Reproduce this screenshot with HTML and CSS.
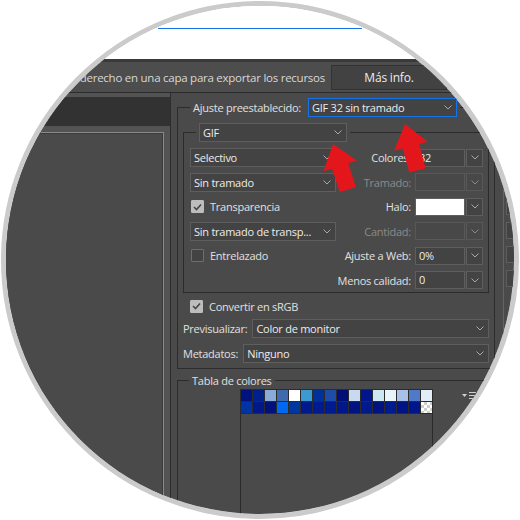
FILE: index.html
```html
<!DOCTYPE html>
<html lang="es">

<head>
    <meta charset="UTF-8">
    <title>Guardar para Web - GIF</title>
    <link rel="stylesheet" href="styles.css">
</head>

<body>
    <div class="lens">
        <div class="screen">
            <div class="topbar"><div class="topline"></div></div>

            <div class="infobar">
                <span class="hint">Haga clic con el botón derecho en una capa para exportar los recursos</span>
                <button class="more">Más info.</button>
            </div>

            <div class="main">
                <div class="preview-col">
                    <div class="tabs"></div>
                    <div class="frame"></div>
                </div>

                <div class="settings">
                    <div class="settings-col">
                        <fieldset class="group preset">
                            <legend>
                                <span class="legend-row">
                                    <span class="label">Ajuste preestablecido:</span>
                                    <span class="select focus preset-select">
                                        <span>GIF 32 sin tramado</span>
                                        <svg class="chev" width="8" height="5" viewBox="0 0 8 5"><polyline points="0.5,0.5 4,4 7.5,0.5"/></svg>
                                    </span>
                                </span>
                            </legend>

                            <fieldset class="group format">
                                <legend>
                                    <span class="select format-select">
                                        <span>GIF</span>
                                        <svg class="chev" width="8" height="5" viewBox="0 0 8 5"><polyline points="0.5,0.5 4,4 7.5,0.5"/></svg>
                                    </span>
                                </legend>

                                <div class="opts">
                                    <span class="select">
                                        <span>Selectivo</span>
                                        <svg class="chev" width="8" height="5" viewBox="0 0 8 5"><polyline points="0.5,0.5 4,4 7.5,0.5"/></svg>
                                    </span>
                                    <span class="label opt-label">Colores:</span>
                                    <span class="combo">
                                        <span class="val">32</span>
                                        <span class="drop"><svg class="chev" width="8" height="5" viewBox="0 0 8 5"><polyline points="0.5,0.5 4,4 7.5,0.5"/></svg></span>
                                    </span>

                                    <span class="select">
                                        <span>Sin tramado</span>
                                        <svg class="chev" width="8" height="5" viewBox="0 0 8 5"><polyline points="0.5,0.5 4,4 7.5,0.5"/></svg>
                                    </span>
                                    <span class="label opt-label disabled">Tramado:</span>
                                    <span class="combo off">
                                        <span class="val"></span>
                                        <span class="drop"><svg class="chev" width="8" height="5" viewBox="0 0 8 5"><polyline points="0.5,0.5 4,4 7.5,0.5"/></svg></span>
                                    </span>

                                    <span class="check">
                                        <span class="box on"><svg width="9" height="8" viewBox="0 0 9 8"><polyline points="1,4 3.5,6.5 8,1.5"/></svg></span>
                                        <span>Transparencia</span>
                                    </span>
                                    <span class="label opt-label">Halo:</span>
                                    <span class="combo halo">
                                        <span class="val"></span>
                                        <span class="drop"><svg class="chev" width="8" height="5" viewBox="0 0 8 5"><polyline points="0.5,0.5 4,4 7.5,0.5"/></svg></span>
                                    </span>

                                    <span class="select">
                                        <span>Sin tramado de transp...</span>
                                        <svg class="chev" width="8" height="5" viewBox="0 0 8 5"><polyline points="0.5,0.5 4,4 7.5,0.5"/></svg>
                                    </span>
                                    <span class="label opt-label disabled">Cantidad:</span>
                                    <span class="combo off">
                                        <span class="val"></span>
                                        <span class="drop"><svg class="chev" width="8" height="5" viewBox="0 0 8 5"><polyline points="0.5,0.5 4,4 7.5,0.5"/></svg></span>
                                    </span>

                                    <span class="check">
                                        <span class="box"></span>
                                        <span>Entrelazado</span>
                                    </span>
                                    <span class="label opt-label">Ajuste a Web:</span>
                                    <span class="combo">
                                        <span class="val">0%</span>
                                        <span class="drop"><svg class="chev" width="8" height="5" viewBox="0 0 8 5"><polyline points="0.5,0.5 4,4 7.5,0.5"/></svg></span>
                                    </span>

                                    <span></span>
                                    <span class="label opt-label">Menos calidad:</span>
                                    <span class="combo">
                                        <span class="val">0</span>
                                        <span class="drop"><svg class="chev" width="8" height="5" viewBox="0 0 8 5"><polyline points="0.5,0.5 4,4 7.5,0.5"/></svg></span>
                                    </span>
                                </div>
                            </fieldset>

                            <span class="check srgb">
                                <span class="box on"><svg width="9" height="8" viewBox="0 0 9 8"><polyline points="1,4 3.5,6.5 8,1.5"/></svg></span>
                                <span>Convertir en sRGB</span>
                            </span>

                            <div class="field-row preview-row">
                                <span class="label">Previsualizar:</span>
                                <span class="select">
                                    <span>Color de monitor</span>
                                    <svg class="chev" width="8" height="5" viewBox="0 0 8 5"><polyline points="0.5,0.5 4,4 7.5,0.5"/></svg>
                                </span>
                            </div>

                            <div class="field-row meta-row">
                                <span class="label">Metadatos:</span>
                                <span class="select">
                                    <span>Ninguno</span>
                                    <svg class="chev" width="8" height="5" viewBox="0 0 8 5"><polyline points="0.5,0.5 4,4 7.5,0.5"/></svg>
                                </span>
                            </div>
                        </fieldset>

                        <fieldset class="group colors">
                            <legend><span class="label">Tabla de colores</span></legend>
                            <span class="panel-menu">
                                <svg width="14" height="7" viewBox="0 0 14 7">
                                    <polygon points="0,2 5,2 2.5,5" />
                                    <rect x="7" y="0" width="7" height="1" />
                                    <rect x="7" y="3" width="7" height="1" />
                                    <rect x="7" y="6" width="7" height="1" />
                                </svg>
                            </span>
                            <div class="swatch-box">
                                <div class="swatches">
                                    <span style="background:#00127f"></span>
                                    <span style="background:#00208c"></span>
                                    <span style="background:#8aaad8"></span>
                                    <span style="background:#3f6aad"></span>
                                    <span style="background:#ffffff"></span>
                                    <span style="background:#3c9ad2"></span>
                                    <span style="background:#00309a"></span>
                                    <span style="background:#1d4ca9"></span>
                                    <span style="background:#000f78"></span>
                                    <span style="background:#c8daf0"></span>
                                    <span style="background:#00168e"></span>
                                    <span style="background:#cde9ef"></span>
                                    <span style="background:#e8f6fb"></span>
                                    <span style="background:#a9c1e7"></span>
                                    <span style="background:#4f7ac8"></span>
                                    <span style="background:#e3edf8"></span>

                                    <span style="background:#0034a5"></span>
                                    <span style="background:#001889"></span>
                                    <span style="background:#00117b"></span>
                                    <span style="background:#0069f0"></span>
                                    <span style="background:#0037a0"></span>
                                    <span style="background:#001a8d"></span>
                                    <span style="background:#001a8f"></span>
                                    <span style="background:#001a92"></span>
                                    <span style="background:#001887"></span>
                                    <span style="background:#001380"></span>
                                    <span style="background:#001a8c"></span>
                                    <span style="background:#001380"></span>
                                    <span style="background:#001a8f"></span>
                                    <span style="background:#001484"></span>
                                    <span style="background:#00168a"></span>
                                    <span class="clear"></span>
                                </div>
                            </div>
                        </fieldset>
                    </div>

                    <div class="side-col">
                        <div class="side-box"></div>
                        <div class="side-box"></div>
                        <div class="side-box"></div>
                        <div class="side-box"></div>
                    </div>
                </div>
            </div>

            <svg class="arrows" width="520" height="520" viewBox="0 0 520 520">
                <defs>
                    <polygon id="arrow" points="0,0 17.5,23 8.5,23 8.5,48 -8.5,48 -8.5,23 -17.5,23" />
                </defs>
                <use href="#arrow" transform="translate(333 144) rotate(-18)" />
                <use href="#arrow" transform="translate(405 124) rotate(-15)" />
            </svg>
        </div>
    </div>
</body>

</html>
```

FILE: styles.css
```css
* {
    box-sizing: border-box;
}

body {
    margin: 0;
    background: #fff;
    font-family: "Open Sans", "Noto Sans", sans-serif;
    font-size: 11px;
    letter-spacing: -0.25px;
    color: #dedede;
}

/* round "magnifier" crop */
.lens {
    width: 518px;
    height: 518px;
    margin: 1px;
    border: 5px solid #cbcbcb;
    border-radius: 50%;
    overflow: hidden;
}

.screen {
    position: relative;
    width: 520px;
    height: 520px;
    margin: -6px 0 0 -6px;
    display: flex;
    flex-direction: column;
    background: #fff;
}

.topbar {
    height: 59px;
    padding-top: 28px;
    background: #fff;
}

.topline {
    width: 204px;
    margin-left: 158px;
    border-top: 1px solid #1473e6;
}

.infobar {
    height: 34px;
    display: flex;
    align-items: center;
    justify-content: flex-end;
    padding-right: 73px;
    background: #4d4d4d;
    border-top: 3px solid #3a3a3a;
    border-bottom: 1px solid #2b2b2b;
}

.hint {
    flex-shrink: 0;
    white-space: nowrap;
    font-size: 11.5px;
    color: #d8d8d8;
}

.more {
    flex-shrink: 0;
    width: 116px;
    height: 25px;
    margin-left: 6px;
    padding: 0;
    background: #424242;
    border: 1px solid #333;
    color: #ececec;
    font: inherit;
    font-size: 12px;
    letter-spacing: -0.2px;
}

.main {
    flex: 1;
    min-height: 0;
    display: flex;
    background: #4a4a4a;
}

.preview-col {
    width: 171px;
    flex-shrink: 0;
    display: flex;
    flex-direction: column;
    padding-top: 4px;
    background: #535353;
    border-right: 1px solid #2d2d2d;
}

.tabs {
    height: 29px;
    background: #323232;
}

.frame {
    flex: 1;
    margin: 6px 6px 0 0;
    background: #4a4a4a;
    border-top: 1px solid #8a8a8a;
    border-right: 1px solid #8a8a8a;
    box-shadow: inset -1px 1px 0 #3b3b3b;
}

.settings {
    flex: 1;
    display: flex;
    padding: 5px 0 0 6px;
}

.settings-col {
    width: 318px;
    flex-shrink: 0;
    display: flex;
    flex-direction: column;
}

.group {
    margin: 0;
    min-width: 0;
    border: 1px solid #2c2c2c;
}

.group legend {
    padding: 0 3px;
}

.legend-row {
    display: flex;
    align-items: center;
    gap: 7px;
}

.label {
    white-space: nowrap;
    color: #e0e0e0;
}

.label.disabled {
    color: #8a8a8a;
}

.chev {
    flex-shrink: 0;
    fill: none;
    stroke: #a9a9a9;
    stroke-width: 1;
}

.select {
    height: 19px;
    display: flex;
    align-items: center;
    justify-content: space-between;
    padding: 0 4px 0 3px;
    background: #434343;
    border: 1px solid #5e5e5e;
    color: #ececec;
    white-space: nowrap;
}

.select.focus {
    border-color: #1473e6;
}

.preset {
    padding: 6px 5px 5px;
}

.preset > legend {
    margin-left: 7px;
}

.preset-select {
    width: 149px;
}

.format {
    padding: 6px 5px 2px 6px;
}

.format > legend {
    margin-left: 6px;
}

.format-select {
    width: 148px;
}

.opts {
    display: grid;
    grid-template-columns: 146px minmax(0, 1fr) 68px;
    grid-auto-rows: 19px;
    row-gap: 5.6px;
    align-items: center;
}

.opt-label {
    text-align: right;
    padding-right: 4px;
}

.combo {
    height: 18px;
    display: flex;
    gap: 1px;
}

.combo .val {
    flex: 1;
    padding-left: 3px;
    line-height: 16px;
    background: #434343;
    border: 1px solid #5e5e5e;
    color: #ececec;
}

.combo .drop {
    width: 17px;
    display: flex;
    align-items: center;
    justify-content: center;
    background: #434343;
    border: 1px solid #5e5e5e;
}

.combo.off .val,
.combo.off .drop {
    background: #484848;
    border-color: #585858;
}

.combo.off .chev {
    stroke: #8a8a8a;
}

.combo.halo .val {
    background: #fff;
}

.check {
    display: flex;
    align-items: center;
    gap: 6px;
    padding-left: 1px;
    color: #e0e0e0;
}

.box {
    width: 13px;
    height: 13px;
    display: flex;
    align-items: center;
    justify-content: center;
    background: #434343;
    border: 1px solid #6e6e6e;
    border-radius: 1px;
}

.box.on {
    background: #bdbdbd;
    border-color: #bdbdbd;
}

.box svg {
    fill: none;
    stroke: #464646;
    stroke-width: 1.6;
}

.srgb {
    height: 19px;
    margin-top: 4px;
    padding-left: 7px;
}

.field-row {
    display: flex;
    align-items: center;
    gap: 5px;
}

.field-row .select {
    flex: 1;
}

.preview-row {
    margin-top: 3px;
}

.meta-row {
    margin-top: 6px;
}

.colors {
    position: relative;
    flex: 1;
    margin-top: 4px;
    padding: 1px 5px 0;
    border-bottom: none;
}

.colors > legend {
    margin-left: 6px;
}

.panel-menu {
    position: absolute;
    top: 4px;
    right: 15px;
    padding: 0 3px;
    display: flex;
    background: #4a4a4a;
    fill: #d0d0d0;
}

.swatch-box {
    width: 193px;
    height: 200px;
    margin: 0 auto;
    border: 1px solid #2b2b2b;
}

.swatches {
    display: grid;
    grid-template-columns: repeat(16, 11px);
    grid-auto-rows: 11px;
    gap: 1px;
    padding-bottom: 1px;
    background: #2b2b2b;
}

.swatches .clear {
    background-color: #fff;
    background-image:
        linear-gradient(45deg, #cfcfcf 25%, transparent 25%, transparent 75%, #cfcfcf 75%),
        linear-gradient(45deg, #cfcfcf 25%, transparent 25%, transparent 75%, #cfcfcf 75%);
    background-size: 6px 6px;
    background-position: 0 0, 3px 3px;
}

.side-col {
    flex: 1;
    margin: 90px 0 0 8px;
    padding: 10px 0 0 2px;
    height: 220px;
    display: flex;
    flex-direction: column;
    gap: 7px;
    border-left: 1px solid #1473e6;
}

.side-box {
    height: 17px;
    border: 1px solid #5e5e5e;
    background: #434343;
}

.arrows {
    position: absolute;
    left: 0;
    top: 0;
    pointer-events: none;
    fill: #e3161b;
}
```
